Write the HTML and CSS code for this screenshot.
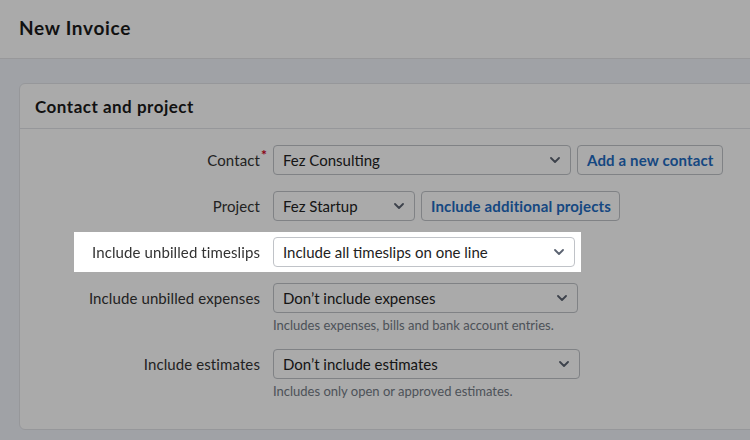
FILE: index.html
```html
<!DOCTYPE html>
<html>
<head>
<meta charset="utf-8">
<link rel="stylesheet" href="styles.css">
</head>
<body>
<header class="page-header"><h1 class="page-title">New Invoice</h1></header>
<main class="page-main">
  <section class="card">
    <div class="card-header"><h2 class="card-title">Contact and project</h2></div>
    <div class="card-body">
      <div class="field">
        <label class="field-label">Contact<span class="req">*</span></label>
        <div class="field-control">
          <div class="inline">
            <div class="select w-contact"><span class="select-text">Fez Consulting</span><svg class="chev" width="10" height="6" viewBox="0 0 10 6"><path d="M1 1l4 4 4-4" fill="none" stroke="currentColor" stroke-width="1.8" stroke-linecap="round" stroke-linejoin="round"/></svg></div>
            <button class="btn">Add a new contact</button>
          </div>
        </div>
      </div>
      <div class="field">
        <label class="field-label">Project</label>
        <div class="field-control">
          <div class="inline">
            <div class="select w-project"><span class="select-text">Fez Startup</span><svg class="chev" width="10" height="6" viewBox="0 0 10 6"><path d="M1 1l4 4 4-4" fill="none" stroke="currentColor" stroke-width="1.8" stroke-linecap="round" stroke-linejoin="round"/></svg></div>
            <button class="btn">Include additional projects</button>
          </div>
        </div>
      </div>
      <div class="field field-highlight">
        <label class="field-label">Include unbilled timeslips</label>
        <div class="field-control">
          <div class="select w-timeslips"><span class="select-text">Include all timeslips on one line</span><svg class="chev" width="10" height="6" viewBox="0 0 10 6"><path d="M1 1l4 4 4-4" fill="none" stroke="currentColor" stroke-width="1.8" stroke-linecap="round" stroke-linejoin="round"/></svg></div>
        </div>
      </div>
      <div class="field">
        <label class="field-label">Include unbilled expenses</label>
        <div class="field-control">
          <div class="select w-expenses"><span class="select-text">Don’t include expenses</span><svg class="chev" width="10" height="6" viewBox="0 0 10 6"><path d="M1 1l4 4 4-4" fill="none" stroke="currentColor" stroke-width="1.8" stroke-linecap="round" stroke-linejoin="round"/></svg></div>
          <p class="hint">Includes expenses, bills and bank account entries.</p>
        </div>
      </div>
      <div class="field">
        <label class="field-label">Include estimates</label>
        <div class="field-control">
          <div class="select w-estimates"><span class="select-text">Don’t include estimates</span><svg class="chev" width="10" height="6" viewBox="0 0 10 6"><path d="M1 1l4 4 4-4" fill="none" stroke="currentColor" stroke-width="1.8" stroke-linecap="round" stroke-linejoin="round"/></svg></div>
          <p class="hint">Includes only open or approved estimates.</p>
        </div>
      </div>
    </div>
  </section>
</main>
<div class="overlay"></div>
</body>
</html>
```
FILE: styles.css
```css
* { box-sizing: border-box; }
html, body { margin: 0; padding: 0; }
body {
  width: 750px;
  height: 440px;
  overflow: hidden;
  background: #f0f4fa;
  font-family: Lato, "Noto Sans", sans-serif;
  color: #333;
}
.page-header {
  height: 59px;
  background: #fff;
  border-bottom: 1px solid #e4e4e8;
  padding: 0 19px;
  display: flex;
  align-items: center;
}
.page-title {
  margin: 0 0 4px;
  font-size: 19px;
  font-weight: 700;
  letter-spacing: 0.7px;
  color: #1a1a1a;
}
.page-main {
  padding: 24px 0 0 19px;
}
.card {
  width: 760px;
  background: #fff;
  border: 1px solid #e2e3e8;
  border-radius: 6px;
}
.card-header {
  height: 45px;
  border-bottom: 1px solid #e2e3e8;
  padding: 0 15px;
  display: flex;
  align-items: center;
}
.card-title {
  margin: 0;
  font-size: 17px;
  font-weight: 700;
  letter-spacing: 0.5px;
  color: #1a1a1a;
}
.card-body {
  padding: 16px 0 30px;
  display: flex;
  flex-direction: column;
  gap: 16px;
}
.field {
  display: flex;
  align-items: flex-start;
}
.field-label {
  position: relative;
  width: 240px;
  flex: none;
  text-align: right;
  font-size: 15px;
  line-height: 30px;
  letter-spacing: 0.1px;
  color: #333;
  margin-right: 13px;
}
.req {
  position: absolute;
  right: -7px;
  top: -5px;
  color: #d0021b;
  font-size: 14px;
  font-weight: 700;
}
.field-control { display: flex; flex-direction: column; }
.inline { display: flex; gap: 6px; }
.select {
  height: 30px;
  border: 1px solid #c0c3c8;
  border-radius: 4px;
  background: #fff;
  display: flex;
  align-items: center;
  justify-content: space-between;
  padding: 0 10px 0 9px;
  font-size: 15px;
  color: #222;
}
.chev { color: #5b6371; flex: none; }
.w-contact { width: 298px; }
.w-project { width: 142px; }
.w-timeslips { width: 302px; }
.w-expenses { width: 305px; }
.w-estimates { width: 307px; }
.btn {
  height: 30px;
  border: 1px solid #c0c3c8;
  border-radius: 4px;
  background: #fff;
  padding: 0 8px 0 9px;
  font-family: inherit;
  font-size: 15px;
  font-weight: 700;
  letter-spacing: 0.15px;
  color: #1f6cc2;
}
.hint {
  margin: 4px 0 0;
  font-size: 13px;
  line-height: 16px;
  color: #747b86;
}
.overlay {
  position: fixed;
  inset: 0;
  background: rgba(0, 0, 0, 0.333);
  z-index: 1;
}
.field-highlight {
  position: relative;
  z-index: 2;
}
.field-highlight::before {
  content: "";
  position: absolute;
  left: 54px;
  width: 507px;
  top: -5px;
  bottom: -5px;
  background: #fff;
  z-index: -1;
}
```
